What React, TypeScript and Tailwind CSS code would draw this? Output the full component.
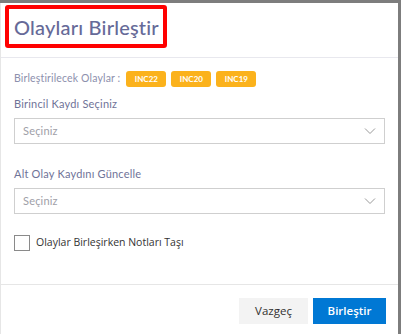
import React, { useState } from "react";

const Chevron = () => (
  <svg width="12" height="8" viewBox="0 0 12 8" fill="none">
    <path d="M1 1.5 L6 6.5 L11 1.5" stroke="#9a9a9a" strokeWidth="1" />
  </svg>
);

const SelectBox = () => (
  <div className="flex h-[26px] w-full items-center justify-between border border-[#cfcfcf] bg-white pl-[8px] pr-[8px]">
    <span className="text-[11px] tracking-[0.2px] text-[#a0a0a8]">Seçiniz</span>
    <Chevron />
  </div>
);

const App = () => {
  const [moveNotes, setMoveNotes] = useState(false);
  const badges = ["INC22", "INC20", "INC19"];

  return (
    <div className="h-[334px] w-[401px] overflow-hidden bg-[#7d7d7d] pt-[3px] font-['Lato',sans-serif]">
      <div className="flex h-[331px] w-[398px] flex-col border-l border-[#e6e6e6] bg-white">
        {/* header */}
        <div className="h-[55px] border-b border-[#e8e8ee] pl-[4px] pt-[2px]">
          <div className="flex h-[43px] w-[162px] items-center rounded-[3px] border-[4px] border-[#ff0000] pl-[5px]">
            <h1 className="text-[20px] font-medium leading-none tracking-[0.2px] text-[#666a98]">Olayları Birleştir</h1>
          </div>
        </div>

        {/* body */}
        <div className="flex flex-1 flex-col px-[13px]">
          <div className="mt-[13px] flex items-center gap-[5px]">
            <span className="mr-[1px] text-[10.5px] tracking-[0.15px] text-[#8d90ad]">Birleştirilecek Olaylar :</span>
            {badges.map((b) => (
              <span
                key={b}
                className="flex h-[16px] w-[40px] items-center justify-center rounded-[3px] bg-[#fbb21c] text-[8px] font-bold text-white"
              >
                {b}
              </span>
            ))}
          </div>

          <label className="mt-[10px] text-[11px] leading-[14px] tracking-[0.2px] text-[#6f7398]">Birincil Kaydı Seçiniz</label>
          <div className="mt-[7px]">
            <SelectBox />
          </div>

          <label className="mt-[23px] text-[11px] leading-[14px] tracking-[0.2px] text-[#6f7398]">Alt Olay Kaydını Güncelle</label>
          <div className="mt-[7px]">
            <SelectBox />
          </div>

          <label className="mt-[21px] flex cursor-pointer items-center gap-[6px]">
            <input
              type="checkbox"
              checked={moveNotes}
              onChange={(e) => setMoveNotes(e.target.checked)}
              className="h-[16px] w-[16px] appearance-none border border-[#8a8a8a] bg-white"
            />
            <span className="font-['Open_Sans',sans-serif] text-[10.5px] text-[#333333]">
              Olaylar Birleşirken Notları Taşı
            </span>
          </label>
        </div>

        {/* footer */}
        <div className="flex h-[50px] items-start justify-end gap-[5px] border-t border-[#e6e6e6] pr-[12px] pt-[13px] font-['Open_Sans',sans-serif]">
          <button className="h-[26px] w-[69px] bg-[#f3f3f3] text-[11.5px] text-[#323130]">Vazgeç</button>
          <button className="h-[26px] w-[73px] bg-[#0078d4] text-[11.5px] font-semibold text-white">Birleştir</button>
        </div>
      </div>
    </div>
  );
};

export default App;
